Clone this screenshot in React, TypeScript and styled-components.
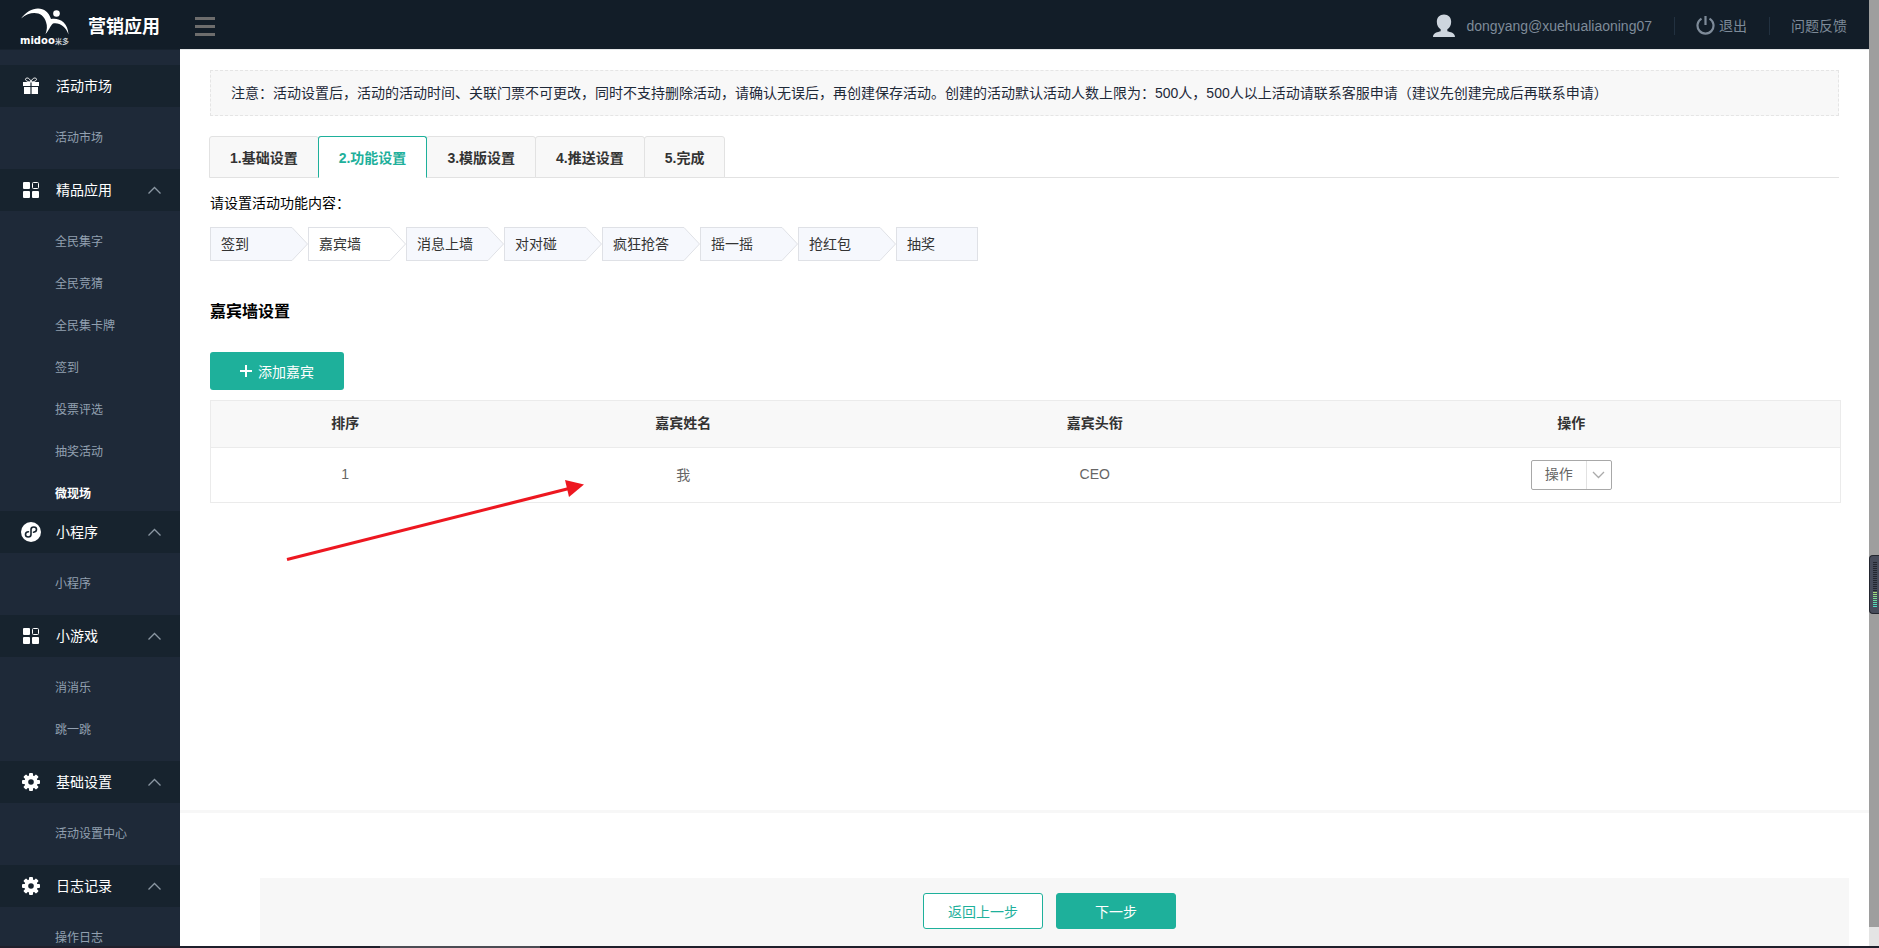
import React from "react";
import styled, { createGlobalStyle, css } from "styled-components";

const Global = createGlobalStyle`
  * { box-sizing: border-box; }
  body { margin: 0; background: #fff; overflow: hidden; }
  body, button { font-family: "Liberation Sans", "Noto Sans CJK SC", sans-serif; font-size: 14px; }
  button { cursor: pointer; padding: 0; }
  a { text-decoration: none; color: inherit; }
  ul { list-style: none; margin: 0; padding: 0; }
`;

const Shell = styled.div`
  position: relative;
  display: flex;
  flex-direction: column;
  height: 100vh;
`;
const Columns = styled.div`
  flex: 1;
  min-height: 0;
  display: flex;
`;
const Page = styled.div`
  flex: 1;
  min-width: 0;
  display: flex;
  flex-direction: column;
`;
const Header = styled.header`
  flex: none;
  height: 49px;
  display: flex;
  align-items: center;
  background: #121d28;
  padding: 0 22px 0 20px;
`;
const Brand = styled.a`
  display: flex;
  align-items: center;
  width: 175px;
  gap: 18px;
  color: #fff;
  font-size: 18px;
  font-weight: bold;
  line-height: 24px;
  padding-top: 4px;
`;
const LogoName = styled.text`
  font: bold 10px "DejaVu Sans", sans-serif;
  fill: #fff;
`;
const LogoCn = styled.text`
  font: bold 7px "Noto Sans CJK SC", sans-serif;
  fill: #c9ced3;
`;
const MenuToggle = styled.button`
  display: flex;
  flex-direction: column;
  gap: 5px;
  width: 20px;
  margin-top: 4px;
  border: 0;
  background: none;
`;
const MenuLine = styled.span`
  height: 3px;
  width: 20px;
  background: #6d6d6d;
`;
const Account = styled.nav`
  margin-left: auto;
  display: flex;
  align-items: center;
  color: #7e8b99;
  line-height: 20px;
  padding-top: 2px;
`;
const AccountItem = styled.a`
  display: flex;
  align-items: center;
  gap: ${(p: { $gap?: number }) => p.$gap ?? 0}px;
`;
const Divider = styled.span`
  width: 1px;
  height: 18px;
  margin: 0 21px 0 22px;
  background: #223140;
`;

const Body = styled.div`
  flex: 1;
  min-height: 0;
  display: flex;
`;
const Sidebar = styled.aside`
  flex: none;
  width: 180px;
  overflow: hidden;
  background: #1e2938;
  border-top: 1px solid #17222e;
  padding-top: 15px;
`;
const GroupHead = styled.button`
  display: flex;
  align-items: center;
  width: 100%;
  height: 42px;
  padding: 0 19px 0 21px;
  border: 0;
  background: #17232e;
  color: #fff;
  text-align: left;
`;
const GroupIcon = styled.span`
  display: flex;
  justify-content: center;
  width: 20px;
  margin-right: 15px;
`;
const GroupName = styled.span`
  flex: 1;
  line-height: 20px;
`;
const GroupList = styled.ul`
  max-height: 300px;
  overflow: hidden;
  padding: 10px 0;
`;
const GroupLink = styled.a<{ $active?: boolean }>`
  display: block;
  height: 42px;
  line-height: 42px;
  padding-left: 55px;
  font-size: 12px;
  color: ${(p) => (p.$active ? "#fff" : "#92a0b0")};
  font-weight: ${(p) => (p.$active ? "bold" : "normal")};
`;

const Main = styled.main`
  flex: 1;
  min-width: 0;
  display: flex;
  flex-direction: column;
  border-top: 1px solid #e6e8ea;
`;
const Content = styled.div`
  flex: 1;
  min-height: 0;
  padding: 20px 30px 0;
  border-bottom: 3px solid #f7f7f7;
`;
const Notice = styled.p`
  margin: 0 0 20px;
  padding: 12px 20px;
  border: 1px dashed #e5e5e5;
  background: #f8f8f8;
  color: #1e2938;
  line-height: 20px;
`;
const TabBar = styled.div`
  display: flex;
  border-bottom: 1px solid #e2e2e2;
`;
const Tab = styled.button<{ $active?: boolean }>`
  height: 42px;
  margin: 0 0 -1px -1px;
  padding: 0 20px;
  border: 1px solid #e2e2e2;
  border-radius: 3px 3px 0 0;
  background: #f8f8f8;
  color: #333;
  font-weight: bold;
  ${(p) =>
    p.$active &&
    css`
      position: relative;
      border-color: #1eb09b;
      border-bottom-color: #fff;
      background: #fff;
      color: #1eb09b;
    `}
`;
const Prompt = styled.p`
  margin: 15px 0 14px;
  line-height: 20px;
  color: #000;
`;
const Steps = styled.ol`
  display: flex;
  list-style: none;
  margin: 0;
  padding: 0;
`;
const Step = styled.li`
  display: flex;
  width: 98px;
`;
const StepButton = styled.button<{ $active?: boolean; $last?: boolean }>`
  width: 82px;
  height: 34px;
  padding: 0 0 2px 10px;
  border: 1px solid #dfe1e6;
  border-right-width: ${(p) => (p.$last ? 1 : 0)}px;
  background: ${(p) => (p.$active ? "#fff" : "#f6f8fd")};
  color: #333;
  text-align: left;
  white-space: nowrap;
`;
const Title = styled.h2`
  margin: 39px 0 28px;
  font-size: 16px;
  line-height: 24px;
  color: #000;
`;
const AddButton = styled.button`
  display: flex;
  align-items: center;
  justify-content: center;
  gap: 6px;
  width: 134px;
  height: 38px;
  margin-bottom: 10px;
  border: 0;
  border-radius: 3px;
  background: #1eb09b;
  color: #fff;
`;
const Table = styled.table`
  width: calc(100% + 2px);
  table-layout: fixed;
  border-collapse: collapse;
  border: 1px solid #ebebeb;
`;
const Th = styled.th`
  height: 47px;
  padding: 0 0 4px;
  background: #f8f8f8;
  border-bottom: 1px solid #ebebeb;
  color: #333;
  font-weight: bold;
`;
const Td = styled.td`
  height: 55px;
  padding: 0 0 3px;
  text-align: center;
  color: #666;
`;
const ActionGroup = styled.button`
  display: inline-flex;
  width: 81px;
  height: 30px;
  margin-top: 3px;
  vertical-align: middle;
  border: 1px solid #a8a8a8;
  border-radius: 2px;
  background: #fff;
  color: #666;
`;
const ActionLabel = styled.span`
  flex: 1;
  line-height: 27px;
`;
const ActionCaret = styled.span`
  display: flex;
  align-items: center;
  justify-content: center;
  width: 25px;
  height: 28px;
  border-left: 1px solid #e2e2e2;
`;
const Footer = styled.footer`
  flex: none;
  display: flex;
  justify-content: center;
  gap: 13px;
  height: 68px;
  margin: 65px 20px 0 80px;
  padding: 15px 10px 0 0;
  background: #f7f7f7;
`;
const FooterButton = styled.button<{ $primary?: boolean }>`
  width: 120px;
  height: 36px;
  border: 1px solid #1eb09b;
  border-radius: 3px;
  background: ${(p) => (p.$primary ? "#1eb09b" : "#fff")};
  color: ${(p) => (p.$primary ? "#fff" : "#1eb09b")};
`;

const ScrollTrack = styled.div`
  flex: none;
  width: 10px;
  background: #e4e4e4;
`;
const ScrollThumb = styled.div`
  height: 98%;
  background: #9e9e9e;
`;
const Taskbar = styled.div`
  flex: none;
  height: 2px;
  background: #1f1f2b;
  padding-left: 380px;
`;
const TaskbarItem = styled.div`
  width: 160px;
  height: 2px;
  background: #4c4c54;
`;
const Meter = styled.div`
  position: absolute;
  right: 0;
  top: 555px;
  width: 10px;
  height: 59px;
  border: 1px solid #23262f;
  border-right: 0;
  border-radius: 4px 0 0 4px;
  background: #474c5b;
  display: flex;
  flex-direction: column;
  gap: 1px;
  padding: 6px 2px 0 3px;
`;
const MeterBar = styled.span<{ $color: string }>`
  height: 1px;
  background: ${(p) => p.$color};
`;
const Pointer = styled.svg`
  position: absolute;
  left: 285px;
  top: 475px;
  pointer-events: none;
`;

const Logo = () => (
  <svg width="50" height="38" viewBox="0 0 50 38" aria-hidden="true">
    <path
      d="M1 10.500C6 4 12 .5 18 .5c6 0 11 4 13 10.500 8-1.500 17 3 17.500 15.500C45.500 18.500 40 14.500 33 15.500c-3 2.500-4 7-7.500 10.500 1.500-4 2-8 .5-12C23.500 4.500 12 1.500 1 10.500Z"
      fill="#fff"
    />
    <circle cx="36.500" cy="5.500" r="3.300" fill="#fff" />
    <LogoName x="0" y="36">midoo</LogoName>
    <LogoCn x="35" y="36">米多</LogoCn>
  </svg>
);

const Gift = () => (
  <svg width="16" height="18" viewBox="0 0 16 18" fill="#fff">
    <path d="M0 5h7.400v4H0zM8.600 5H16v4H8.600zM1 10h6.400v7H1zM8.600 10H15v7H8.600z" />
    <path d="M8 5C5 5 2 3.500 2.500 2 3.500 0 7 1 8 5Zm0 0c3 0 6-1.500 5.500-3C12.500 0 9 1 8 5Z" fill="none" stroke="#fff" />
  </svg>
);
const Blocks = () => (
  <svg width="16" height="16" viewBox="0 0 16 16" fill="#fff">
    <rect width="7" height="7" rx="1" />
    <rect x="9.500" y=".5" width="6" height="6" rx="1" fill="none" stroke="#fff" />
    <rect y="9" width="7" height="7" rx="1" />
    <rect x="9" y="9" width="7" height="7" rx="1" />
  </svg>
);
const MiniApp = () => (
  <svg width="20" height="20" viewBox="0 0 20 20">
    <circle cx="10" cy="10" r="10" fill="#fff" />
    <path d="M12.500 10.200c1.800-.2 3-1.300 3-2.700 0-1.500-1.200-2.500-2.700-2.500S10 6 10 7.500v5c0 1.500-1.300 2.500-2.800 2.500s-2.700-1-2.700-2.500c0-1.400 1.200-2.500 3-2.700" fill="none" stroke="#17232e" strokeWidth="1.600" strokeLinecap="round" />
  </svg>
);
const Gear = () => (
  <svg width="18" height="18" viewBox="-9 -9 18 18" fill="#fff">
    {[0, 45, 90, 135].map((a) => (
      <rect key={a} x="-2" y="-9" width="4" height="18" rx="1" transform={`rotate(${a})`} />
    ))}
    <circle r="6.700" />
    <circle r="2.800" fill="#17232e" />
  </svg>
);
const Chevron = ({ down }: { down?: boolean }) => (
  <svg width="13" height="8" viewBox="0 0 13 8" fill="none" stroke={down ? "#aaa" : "#8b97a3"} strokeWidth="1.300">
    <path d={down ? "M1 1l5.500 5.500L12 1" : "M.5 7.500l6-6 6 6"} />
  </svg>
);

const icons = { gift: Gift, blocks: Blocks, mini: MiniApp, gear: Gear };
const groups: { name: string; icon: keyof typeof icons; fixed?: boolean; items: string[] }[] = [
  { name: "活动市场", icon: "gift", fixed: true, items: ["活动市场"] },
  { name: "精品应用", icon: "blocks", items: ["全民集字", "全民竞猜", "全民集卡牌", "签到", "投票评选", "抽奖活动", "微现场"] },
  { name: "小程序", icon: "mini", items: ["小程序"] },
  { name: "小游戏", icon: "blocks", items: ["消消乐", "跳一跳"] },
  { name: "基础设置", icon: "gear", items: ["活动设置中心"] },
  { name: "日志记录", icon: "gear", items: ["操作日志"] },
];
const tabs = ["1.基础设置", "2.功能设置", "3.模版设置", "4.推送设置", "5.完成"];
const steps = ["签到", "嘉宾墙", "消息上墙", "对对碰", "疯狂抢答", "摇一摇", "抢红包", "抽奖"];
const meter = [...Array(15).fill("#23262f"), "#a5dc78", "#98dc80", "#88dc8a", "#78dc94", "#68dca0", "#5cdcae", "#54dcb8", "#4cdcc0"];

export default function App() {
  return (
    <Shell>
      <Global />
      <Columns>
        <Page>
          <Header>
            <Brand href="#">
              <Logo />
              营销应用
            </Brand>
            <MenuToggle aria-label="菜单">
              <MenuLine />
              <MenuLine />
              <MenuLine />
            </MenuToggle>
            <Account>
              <AccountItem href="#" $gap={12}>
                <svg width="22" height="24" viewBox="0 0 23 24" fill="#cdd5de">
                  <path d="M11.500 0C7 0 4 3 4 7.500c0 3.500 1.500 6.500 4 8v2C5 18.500 0 19 0 23.500h23c0-4.500-5-5-8-6v-2c2.500-1.500 4-4.500 4-8C19 3 16 0 11.500 0Z" />
                </svg>
                dongyang@xuehualiaoning07
              </AccountItem>
              <Divider />
              <AccountItem href="#" $gap={4}>
                <svg width="19" height="19" viewBox="0 0 19 19" fill="none" stroke="#7e8b99" strokeWidth="2.200">
                  <path d="M9.500 0v9M5.500 2.600a8 8 0 1 0 8 0" />
                </svg>
                退出
              </AccountItem>
              <Divider />
              <AccountItem href="#">问题反馈</AccountItem>
            </Account>
          </Header>
          <Body>
            <Sidebar>
              {groups.map((g) => {
                const Icon = icons[g.icon];
                return (
                  <section key={g.name}>
                    <GroupHead>
                      <GroupIcon>
                        <Icon />
                      </GroupIcon>
                      <GroupName>{g.name}</GroupName>
                      {!g.fixed && <Chevron />}
                    </GroupHead>
                    <GroupList>
                      {g.items.map((t) => (
                        <li key={t}>
                          <GroupLink href="#" $active={t === "微现场"}>
                            {t}
                          </GroupLink>
                        </li>
                      ))}
                    </GroupList>
                  </section>
                );
              })}
            </Sidebar>
            <Main>
              <Content>
                <Notice>
                  注意：活动设置后，活动的活动时间、关联门票不可更改，同时不支持删除活动，请确认无误后，再创建保存活动。创建的活动默认活动人数上限为：500人，500人以上活动请联系客服申请（建议先创建完成后再联系申请）
                </Notice>
                <TabBar role="tablist">
                  {tabs.map((t, i) => (
                    <Tab key={t} role="tab" aria-selected={i === 1} $active={i === 1}>
                      {t}
                    </Tab>
                  ))}
                </TabBar>
                <Prompt>请设置活动功能内容：</Prompt>
                <Steps>
                  {steps.map((s, i) => {
                    const last = i === steps.length - 1;
                    return (
                      <Step key={s}>
                        <StepButton $active={i === 1} $last={last}>
                          {s}
                        </StepButton>
                        {!last && (
                          <svg width="16" height="34" viewBox="0 0 16 34" fill={i === 1 ? "#fff" : "#f6f8fd"} stroke="#dfe1e6">
                            <path d="M0 .5 15.500 17 0 33.500" />
                          </svg>
                        )}
                      </Step>
                    );
                  })}
                </Steps>
                <Title>嘉宾墙设置</Title>
                <AddButton>
                  <svg width="12" height="12" viewBox="0 0 12 12" stroke="#fff" strokeWidth="2" aria-hidden="true">
                    <path d="M6 0v12M0 6h12" />
                  </svg>
                  添加嘉宾
                </AddButton>
                <Table>
                  <colgroup>
                    <col width="16.5%" />
                    <col width="25%" />
                    <col width="25.5%" />
                    <col width="33%" />
                  </colgroup>
                  <thead>
                    <tr>
                      <Th>排序</Th>
                      <Th>嘉宾姓名</Th>
                      <Th>嘉宾头衔</Th>
                      <Th>操作</Th>
                    </tr>
                  </thead>
                  <tbody>
                    <tr>
                      <Td>1</Td>
                      <Td>我</Td>
                      <Td>CEO</Td>
                      <Td>
                        <ActionGroup aria-haspopup="menu">
                          <ActionLabel>操作</ActionLabel>
                          <ActionCaret>
                            <Chevron down />
                          </ActionCaret>
                        </ActionGroup>
                      </Td>
                    </tr>
                  </tbody>
                </Table>
              </Content>
              <Footer>
                <FooterButton>返回上一步</FooterButton>
                <FooterButton $primary>下一步</FooterButton>
              </Footer>
            </Main>
          </Body>
        </Page>
        <ScrollTrack>
          <ScrollThumb />
        </ScrollTrack>
      </Columns>
      <Taskbar>
        <TaskbarItem />
      </Taskbar>
      <Meter>
        {meter.map((c, i) => (
          <MeterBar key={i} $color={c} />
        ))}
      </Meter>
      <Pointer width="304" height="90" viewBox="0 0 304 90" aria-hidden="true">
        <path d="M2 84.500 284 13.500" stroke="#ed1720" strokeWidth="3" />
        <path d="M280 5 299 9.500 284 22Z" fill="#ed1720" />
      </Pointer>
    </Shell>
  );
}
